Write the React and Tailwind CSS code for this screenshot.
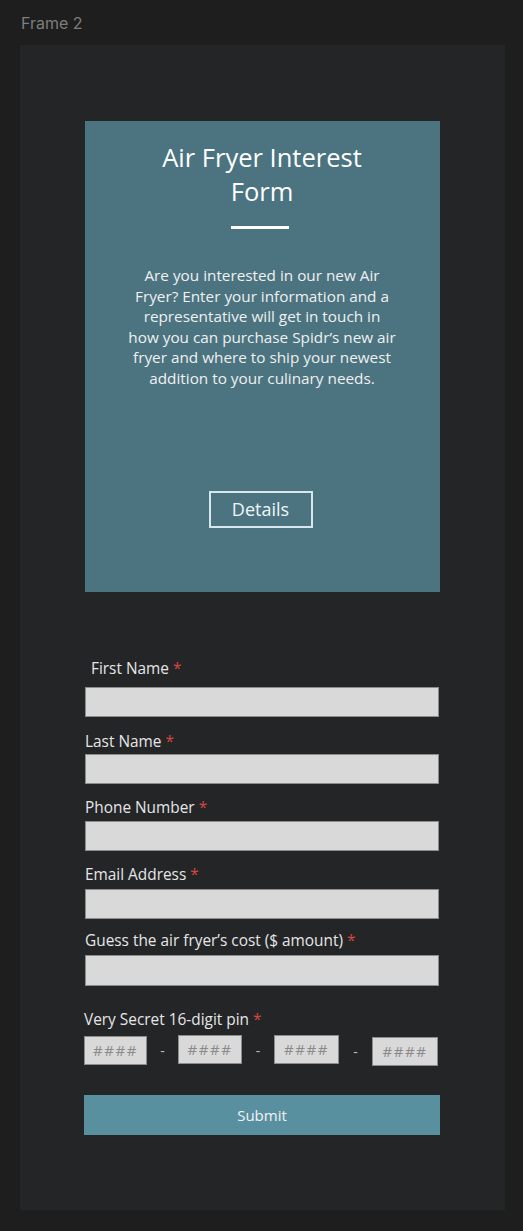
export default function App() {
  const sans = { fontFamily: '"Open Sans", "Noto Sans", sans-serif' };
  const Label = ({ children, className = "" }) => (
    <div className={"text-[15.4px] leading-[20px] text-[#e6e6e6] " + className} style={sans}>
      {children} <span className="text-[#d9453e]">*</span>
    </div>
  );
  const Input = ({ className = "" }) => (
    <div className={"h-[30px] w-[354px] bg-[#d9d9d9] border border-[#8c8c8c] " + className} />
  );
  const Pin = ({ className = "" }) => (
    <div
      className={"h-[29px] bg-[#d9d9d9] border border-[#8c8c8c] flex items-center justify-center text-[15px] text-[#8a8a8a] tracking-[1.5px] " + className}
      style={sans}
    >
      ####
    </div>
  );
  return (
    <div className="min-h-[1231px] w-[523px] bg-[#1e1e1e] pt-[13px]">
      <div className="pl-[21px] h-[32px] text-[16px] leading-[20px] text-[#7d7d7d]" style={{ fontFamily: 'Inter, "Liberation Sans", sans-serif' }}>
        Frame 2
      </div>
      <div className="ml-[20px] w-[485px] h-[1165px] bg-[#242527] pt-[76px] pl-[65px]">
        <div className="w-[355px] h-[471px] bg-[#4b7480] flex flex-col items-center pt-[19px]" style={sans}>
          <div className="text-[25.5px] leading-[34px] text-white text-center w-[260px] -ml-[1px]">
            Air Fryer Interest Form
          </div>
          <div className="mt-[18px] w-[58px] h-[3px] bg-white -ml-[6px]" />
          <p className="mt-[36px] text-center text-[15.3px] leading-[20.5px] text-[#f0f0f0] whitespace-nowrap -ml-[1px]">
            Are you interested in our new Air<br />
            Fryer? Enter your information and a<br />
            representative will get in touch in<br />
            how you can purchase Spidr’s new air<br />
            fryer and where to ship your newest<br />
            addition to your culinary needs.
          </p>
          <div className="mt-[103px] w-[104px] h-[37px] border-2 border-[#d6e8ee] flex items-center justify-center text-[18px] text-[#eef6f8] -ml-[4px]">
            Details
          </div>
        </div>

        <div className="pt-[67px]">
          <Label className="pl-[6px]">First Name</Label>
          <Input className="mt-[8px]" />
          <Label className="mt-[15px]">Last Name</Label>
          <Input className="mt-[2px]" />
          <Label className="mt-[14px]">Phone Number</Label>
          <Input className="mt-[3px]" />
          <Label className="mt-[14px]">Email Address</Label>
          <Input className="mt-[4px]" />
          <Label className="mt-[12px]">Guess the air fryer’s cost ($ amount)</Label>
          <Input className="mt-[4px] h-[31px]" />
          <Label className="mt-[24px] -ml-[1px]">Very Secret 16-digit pin</Label>
          <div className="mt-[5px] -ml-[1px] flex items-start text-[#bdbdbd] text-[14px]" style={sans}>
            <Pin className="w-[63px] mt-[1px]" />
            <div className="w-[31px] text-center leading-[32px]">-</div>
            <Pin className="w-[64px]" />
            <div className="w-[32px] text-center leading-[32px]">-</div>
            <Pin className="w-[65px]" />
            <div className="w-[33px] text-center leading-[34px]">-</div>
            <Pin className="w-[66px] mt-[2px]" />
          </div>
          <div className="mt-[26px] -ml-[1px] w-[356px] h-[40px] bg-[#5890a0] flex items-center justify-center text-[15px] text-[#f2f2f2]" style={sans}>
            Submit
          </div>
        </div>
      </div>
    </div>
  );
}
